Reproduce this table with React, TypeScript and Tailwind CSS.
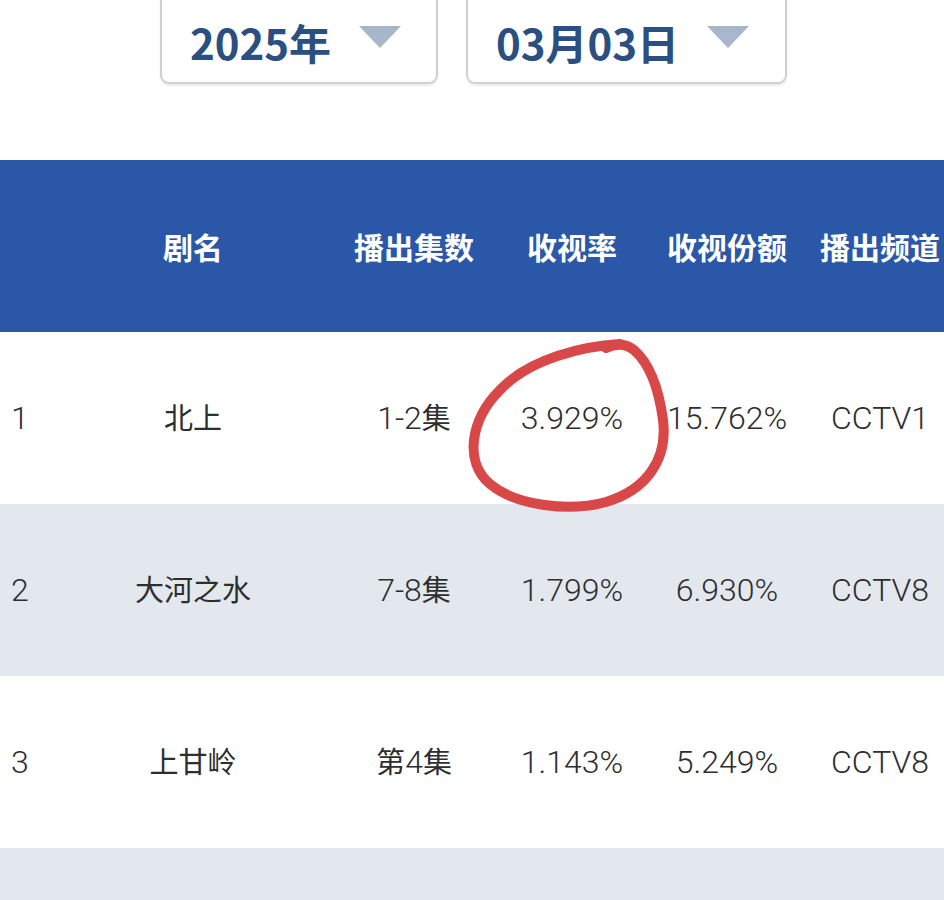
import React from 'react';

const rows = [
  { rank: '1', name: '北上', eps: '1-2集', rate: '3.929%', share: '15.762%', channel: 'CCTV1' },
  { rank: '2', name: '大河之水', eps: '7-8集', rate: '1.799%', share: '6.930%', channel: 'CCTV8' },
  { rank: '3', name: '上甘岭', eps: '第4集', rate: '1.143%', share: '5.249%', channel: 'CCTV8' },
];

const cols = 'grid w-[957px] grid-cols-[51px_284px_158px_158px_152px_154px] items-center';

// latin digits in the source font run taller than the CJK glyphs
const Mixed = ({ text }: { text: string }) => (
  <>
    {text.split(/([\u4e00-\u9fff]+)/).map((part, i) =>
      /[\u4e00-\u9fff]/.test(part) ? (
        <span key={i} className="text-[29px] font-['Noto_Sans_CJK_SC',sans-serif] font-normal">
          {part}
        </span>
      ) : (
        <span key={i}>{part}</span>
      )
    )}
  </>
);

const Caret = () => (
  <svg width="42" height="22" viewBox="0 0 42 22" className="shrink-0">
    <path d="M0 0 H42 L21 22 Z" fill="#a7b6ca" />
  </svg>
);

const App = () => {
  return (
    <div className="relative w-[944px] h-[900px] overflow-hidden bg-white font-['Noto_Sans_CJK_SC',sans-serif]">
      {/* date pickers */}
      <div className="flex h-[84px] gap-[28px] pl-[160px]">
        <div className="-mt-[16px] flex h-[100px] w-[278px] items-center rounded-[9px] border-2 border-[#cdd1d6] pt-[16px] pl-[28px] shadow-[0_2px_2px_rgba(0,0,0,0.08)]">
          <span className="text-[42px] font-bold leading-none text-[#2b4f80]">2025年</span>
          <span className="mb-[10px] ml-[28px]">
            <Caret />
          </span>
        </div>
        <div className="-mt-[16px] flex h-[100px] w-[321px] items-center rounded-[9px] border-2 border-[#cdd1d6] pt-[16px] pl-[28px] shadow-[0_2px_2px_rgba(0,0,0,0.08)]">
          <span className="text-[42px] font-bold leading-none text-[#2b4f80]">03月03日</span>
          <span className="mb-[10px] ml-[28px]">
            <Caret />
          </span>
        </div>
      </div>

      {/* table */}
      <div className="mt-[76px]">
        <div className={`${cols} h-[172px] bg-[#2a57a8] text-[30px] font-bold text-white`}>
          <div></div>
          <div className="text-center">剧名</div>
          <div className="text-center">播出集数</div>
          <div className="text-center">收视率</div>
          <div className="text-center">收视份额</div>
          <div className="text-center whitespace-nowrap">播出频道</div>
        </div>
        {rows.map((r, i) => (
          <div
            key={r.rank}
            className={`${cols} h-[172px] font-['Roboto','Noto_Sans_CJK_SC',sans-serif] text-[32px] font-light text-[#2e2e2e] ${i % 2 === 1 ? 'bg-[#e3e8ef]' : 'bg-white'}`}
          >
            <div className="pl-[11px]">{r.rank}</div>
            <div className="text-center">
              <Mixed text={r.name} />
            </div>
            <div className="text-center">
              <Mixed text={r.eps} />
            </div>
            <div className="text-center">{r.rate}</div>
            <div className="text-center">{r.share}</div>
            <div className="text-center">{r.channel}</div>
          </div>
        ))}
        <div className="h-[60px] bg-[#e3e8ef]"></div>
      </div>

      {/* hand-drawn red circle */}
      <svg className="pointer-events-none absolute left-0 top-0" width="944" height="900" viewBox="0 0 944 900">
        <path
          d="M620 344 C585 346 530 358 500 390 C470 420 464 462 490 484 C516 506 570 512 606 502 C646 490 668 460 663 420 C659 390 650 364 634 350 C626 344 616 343 606 348"
          fill="none"
          stroke="#d94848"
          strokeWidth="10"
          strokeLinecap="round"
        />
      </svg>
    </div>
  );
};

export default App;
